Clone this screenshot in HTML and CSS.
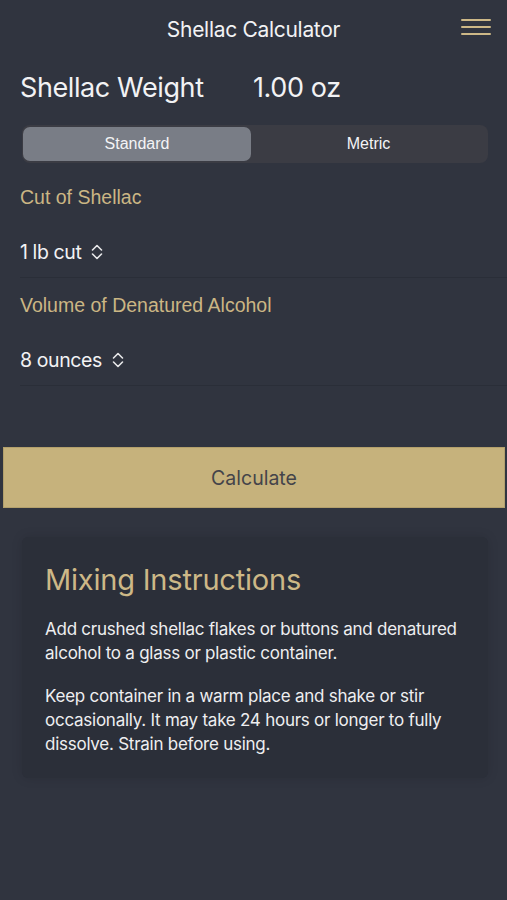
FILE: index.html
```html
<!DOCTYPE html>
<html>
<head>
  <title>Shellac Calculator</title>
  <meta name="viewport" content="width=device-width, initial-scale=1.0">
  <link rel="stylesheet" href="styles.css">
</head>
<body>
  <header class="topbar">
    <h1>Shellac Calculator</h1>
    <button class="menu" aria-label="Menu">
      <span></span><span></span><span></span>
    </button>
  </header>

  <!-- Result -->
  <div class="result">
    <span class="result-label">Shellac Weight</span>
    <span class="result-value">1.00 oz</span>
  </div>

  <div class="segment">
    <button class="seg active">Standard</button>
    <button class="seg">Metric</button>
  </div>

  <!-- Inputs -->
  <div class="field">
    <div class="field-label">Cut of Shellac</div>
    <div class="picker">1 lb cut
      <svg width="14" height="18" viewBox="0 0 14 18"><path d="M2.5 7l4.5-4.5 4.5 4.5M2.5 11l4.5 4.5 4.5-4.5" fill="none" stroke="#e8e8ea" stroke-width="1.6" stroke-linecap="round" stroke-linejoin="round"/></svg>
    </div>
  </div>
  <div class="field">
    <div class="field-label">Volume of Denatured Alcohol</div>
    <div class="picker">8 ounces
      <svg width="14" height="18" viewBox="0 0 14 18"><path d="M2.5 7l4.5-4.5 4.5 4.5M2.5 11l4.5 4.5 4.5-4.5" fill="none" stroke="#e8e8ea" stroke-width="1.6" stroke-linecap="round" stroke-linejoin="round"/></svg>
    </div>
  </div>

  <button class="calc">Calculate</button>

  <div class="card">
    <h2>Mixing Instructions</h2>
    <p>Add crushed shellac flakes or buttons and denatured alcohol to a glass or plastic container.</p>
    <p>Keep container in a warm place and shake or stir occasionally. It may take 24 hours or longer to fully dissolve. Strain before using.</p>
  </div>
</body>
</html>
```

FILE: styles.css
```css
body {
  margin: 0;
  background-color: #30343f;
  color: #f2f2f4;
  font-family: Inter, "Noto Sans", sans-serif;
  min-height: 900px;
}
.topbar {
  position: relative;
  height: 58px;
  display: flex;
  align-items: center;
  justify-content: center;
}
.topbar h1 {
  margin: 0;
  font-size: 21px;
  font-weight: 400;
  letter-spacing: -0.3px;
}
.menu {
  position: absolute;
  right: 16px;
  top: 19px;
  width: 30px;
  padding: 0;
  border: none;
  background: none;
  display: flex;
  flex-direction: column;
  gap: 5px;
}
.menu span {
  display: block;
  height: 2px;
  background-color: #cdb887;
  border-radius: 1px;
}
.result {
  display: flex;
  align-items: center;
  padding: 12px 20px 0;
  height: 34px;
  font-size: 27px;
  letter-spacing: -0.4px;
}
.result-label {
  width: 233px;
}
.segment {
  display: flex;
  margin: 21px 19px 7px 22px;
  padding: 2px 2px 2px 1px;
  background-color: #3b3c44;
  border-radius: 8px;
}
.seg {
  flex: 1;
  height: 34px;
  padding: 0 0 1px;
  border: none;
  border-radius: 7px;
  background: none;
  color: #f4f4f6;
  font-family: "Liberation Sans", Arial, sans-serif;
  font-size: 16px;
}
.seg.active {
  flex: 0 0 228px;
  background-color: #797d86;
}
.field {
  margin-left: 20px;
  padding-top: 15px;
  border-bottom: 1px solid #2a2e38;
}
.field-label {
  height: 24px;
  line-height: 24px;
  color: #cbb684;
  font-family: "Liberation Sans", Arial, sans-serif;
  font-size: 19.5px;
}
.picker {
  height: 50px;
  margin-top: 18px;
  display: flex;
  align-items: center;
  gap: 9px;
  font-family: Inter, sans-serif;
  font-size: 19.5px;
  letter-spacing: -0.4px;
}
.calc {
  display: block;
  width: 502px;
  height: 61px;
  margin: 61px 0 0 3px;
  border: 1px solid #b3a06c;
  background-color: #c6b27c;
  color: #44444a;
  font-family: Inter, sans-serif;
  font-size: 19.5px;
}
.card {
  margin: 29px 19px 0 22px;
  padding: 26px 23px 22px;
  background-color: #2b2f39;
  border-radius: 6px;
  box-shadow: 0 0 12px rgba(0, 0, 0, 0.12);
}
.card h2 {
  margin: 0 0 20px;
  color: #cdb887;
  font-size: 29px;
  line-height: 34px;
  font-weight: 400;
  letter-spacing: -0.2px;
}
.card p {
  margin: 0 0 19px;
  font-size: 17px;
  line-height: 24px;
  letter-spacing: -0.25px;
  color: #eeeef0;
}
.card p:last-child {
  margin-bottom: 0;
}
```
